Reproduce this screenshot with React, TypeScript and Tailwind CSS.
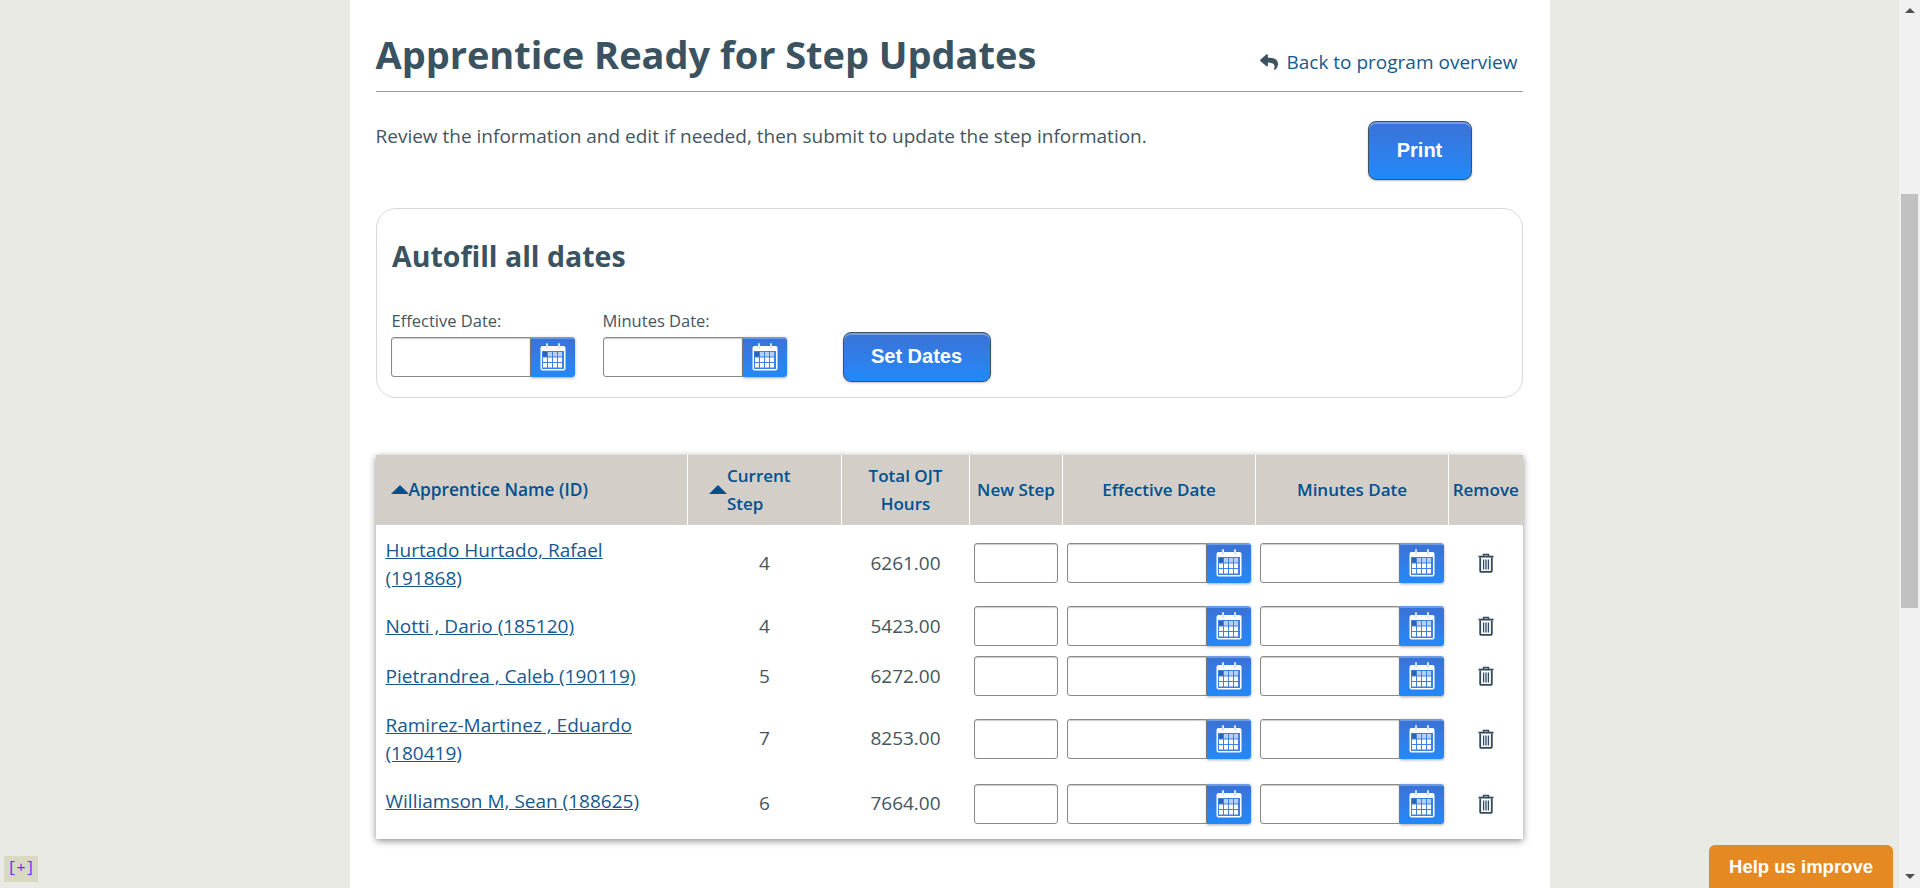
import React from 'react';
import { FaReply } from 'react-icons/fa';

const apprentices = [
  { name: 'Hurtado Hurtado, Rafael (191868)', step: 4, hours: '6261.00', rowClass: 'h-[76px]', linkClass: 'w-[225px] pt-[1px]' },
  { name: 'Notti , Dario (185120)', step: 4, hours: '5423.00', rowClass: 'h-[50px]', linkClass: '' },
  { name: 'Pietrandrea , Caleb (190119)', step: 5, hours: '6272.00', rowClass: 'h-[50px]', linkClass: '' },
  { name: 'Ramirez-Martinez , Eduardo (180419)', step: 7, hours: '8253.00', rowClass: 'h-[75px]', linkClass: 'w-[260px]' },
  { name: 'Williamson M, Sean (188625)', step: 6, hours: '7664.00', rowClass: 'h-[55px]', linkClass: 'pb-[6px]' },
];

const blueGradient = 'bg-gradient-to-b from-[#3a72d6] to-[#2089fa]';

const CalendarIcon = () => (
  <svg width="26" height="28" viewBox="0 0 26 28">
    <rect x="0.5" y="3" width="25" height="24.5" rx="2" fill="#fff" />
    <rect x="2" y="8" width="22" height="18" fill="#3f80e4" />
    <rect x="6" y="0" width="2" height="6" rx="1" fill="#d6e6ff" />
    <rect x="18" y="0" width="2" height="6" rx="1" fill="#d6e6ff" />
    {[0, 1, 2].map(row =>
      [0, 1, 2, 3].map(col => (
        <rect
          key={`${row}-${col}`}
          x={3 + col * 5}
          y={9 + row * 5.5}
          width="4"
          height="4.5"
          fill={row === 0 ? (col === 0 ? '#2a62b8' : '#b4d0f8') : '#fff'}
        />
      ))
    )}
  </svg>
);

const TrashIcon = () => (
  <svg width="16" height="20" viewBox="0 0 16 20" fill="none" stroke="#33485a">
    <path d="M5.5 3V1.5h5V3" strokeWidth="1.4" />
    <path d="M0.5 3.6h15" strokeWidth="1.8" />
    <path d="M2.2 4.5v13.4c0 .6.4 1 1 1h9.6c.6 0 1-.4 1-1V4.5" strokeWidth="1.8" />
    <path d="M5.6 6.5v10M8 6.5v10M10.4 6.5v10" strokeWidth="1.3" />
  </svg>
);

const DateInput = () => (
  <div className="flex">
    <input className="w-[140px] h-[40px] bg-white border border-[#8a8a84] rounded-l-[3px] shadow-[inset_0_1px_1px_rgba(0,0,0,0.2)]" />
    <button className={`w-[44px] h-[40px] pb-[2px] flex items-center justify-center rounded-r-[3px] border-t-2 border-[#6c9be6] shadow-[0_1px_3px_rgba(0,0,0,0.35)] ${blueGradient}`}>
      <CalendarIcon />
    </button>
  </div>
);

const SortArrow = () => (
  <span className="inline-block w-0 h-0 mb-[2px] border-x-[9px] border-x-transparent border-b-[9px] border-b-[#00508f]" />
);

const ActionButton = ({ label, className }: { label: string; className: string }) => (
  <button className={`rounded-[8px] border border-[#3b5361] pb-[2px] text-white font-bold text-[20px] font-['Liberation_Sans',sans-serif] shadow-[inset_0_2px_0_rgba(255,255,255,0.3),0_1px_2px_rgba(0,0,0,0.25)] ${blueGradient} ${className}`}>
    {label}
  </button>
);

export default function App() {
  const th = 'border-l border-white font-semibold text-[#00508f] text-[17px] leading-[28px] p-0';
  return (
    <div className="relative flex h-[888px] overflow-hidden font-['Open_Sans',sans-serif] text-[#44555f]">
      <div className="flex-1 bg-[#e9eae4]">
        <div className="w-[1200px] h-full mx-auto bg-white pl-[26px] pr-[27px]">
          <div className="flex items-end justify-between h-[92px] border-b border-[#999]">
            <h1 className="text-[38px] leading-[54px] font-bold text-[#3b5361] tracking-[-0.03px] pb-[10px]">Apprentice Ready for Step Updates</h1>
            <a className="flex items-center gap-[8px] text-[19px] leading-[28px] text-[#14598f] pr-[5px] mb-[15px]">
              <FaReply className="w-[18px] h-[18px] text-[#3b5361]" />
              Back to program overview
            </a>
          </div>

          <div className="flex justify-between pt-[29px]">
            <p className="text-[19px] leading-[28px] mt-[1px]">Review the information and edit if needed, then submit to update the step information.</p>
            <ActionButton label="Print" className="w-[104px] h-[59px] mr-[51px]" />
          </div>

          <div className="mt-[28px] h-[190px] rounded-[20px] border border-[#d8d8d8] pl-[14px] pr-[15px] pt-[29px]">
            <h2 className="text-[28.5px] leading-[36px] font-bold text-[#3b5361] pl-[1.5px]">Autofill all dates</h2>
            <div className="flex mt-[35px]">
              <div className="w-[212px]">
                <label className="block text-[16.5px] leading-[24px] mb-[4px] pl-[1px]">Effective Date:</label>
                <DateInput />
              </div>
              <div className="w-[240px]">
                <label className="block text-[16.5px] leading-[24px] mb-[4px]">Minutes Date:</label>
                <DateInput />
              </div>
              <ActionButton label="Set Dates" className="w-[148px] h-[50px] mt-[23px]" />
            </div>
          </div>

          <div className="mt-[57px] h-[384px] bg-white shadow-[0_2px_7px_rgba(0,0,0,0.45)]">
            <table className="w-full table-fixed border-collapse">
              <colgroup>
                <col className="w-[312px]" />
                <col className="w-[154px]" />
                <col className="w-[128px]" />
                <col className="w-[93px]" />
                <col className="w-[193px]" />
                <col className="w-[193px]" />
                <col />
              </colgroup>
              <thead>
                <tr className="h-[70px] bg-[#d3cec8]">
                  <th className="font-semibold text-[#00508f] text-[17.3px] p-0 text-left pl-[15px]">
                    <span className="flex items-center gap-0"><SortArrow />Apprentice Name (ID)</span>
                  </th>
                  <th className={`${th} text-left pl-[21px]`}>
                    <span className="flex items-center"><SortArrow /><span>Current<br />Step</span></span>
                  </th>
                  <th className={th}>Total OJT<br />Hours</th>
                  <th className={th}>New Step</th>
                  <th className={th}>Effective Date</th>
                  <th className={th}>Minutes Date</th>
                  <th className={th}>Remove</th>
                </tr>
              </thead>
              <tbody>
                {apprentices.map(a => (
                  <tr key={a.name} className={a.rowClass}>
                    <td className="pl-[10px] text-[19px] leading-[28px] text-[#14598f]">
                      <a className={`block ${a.linkClass}`}><span className="underline">{a.name}</span></a>
                    </td>
                    <td className="text-center text-[19px]">{a.step}</td>
                    <td className="text-center text-[19px]">{a.hours}</td>
                    <td className="text-center">
                      <input className="w-[84px] h-[40px] border border-[#8a8a84] rounded-[3px] align-middle shadow-[inset_0_1px_1px_rgba(0,0,0,0.2)]" />
                    </td>
                    <td><div className="flex justify-center"><DateInput /></div></td>
                    <td><div className="flex justify-center"><DateInput /></div></td>
                    <td><div className="flex justify-center"><TrashIcon /></div></td>
                  </tr>
                ))}
              </tbody>
            </table>
          </div>
        </div>
      </div>

      {/* scrollbar */}
      <div className="w-[21px] h-full bg-[#f1f1f1] flex flex-col items-center">
        <span className="mt-[8px] w-0 h-0 border-x-[5px] border-x-transparent border-b-[5px] border-b-[#505050]" />
        <div className="mt-[181px] w-[17px] h-[414px] bg-[#c1c1c1]" />
        <span className="mt-auto mb-[9px] w-0 h-0 border-x-[5px] border-x-transparent border-t-[5px] border-t-[#505050]" />
      </div>

      <div className="absolute left-[4px] top-[856px] w-[34px] h-[26px] bg-[#d9d9c3] flex items-center justify-center text-[15px] text-[#6a2cff] font-['Liberation_Mono',monospace]">[+]</div>
      <button className="absolute left-[1709px] top-[845px] w-[184px] h-[43px] bg-[#e58a23] rounded-t-[6px] text-white font-bold text-[18.5px] font-['Liberation_Sans',sans-serif]">Help us improve</button>
    </div>
  );
}
